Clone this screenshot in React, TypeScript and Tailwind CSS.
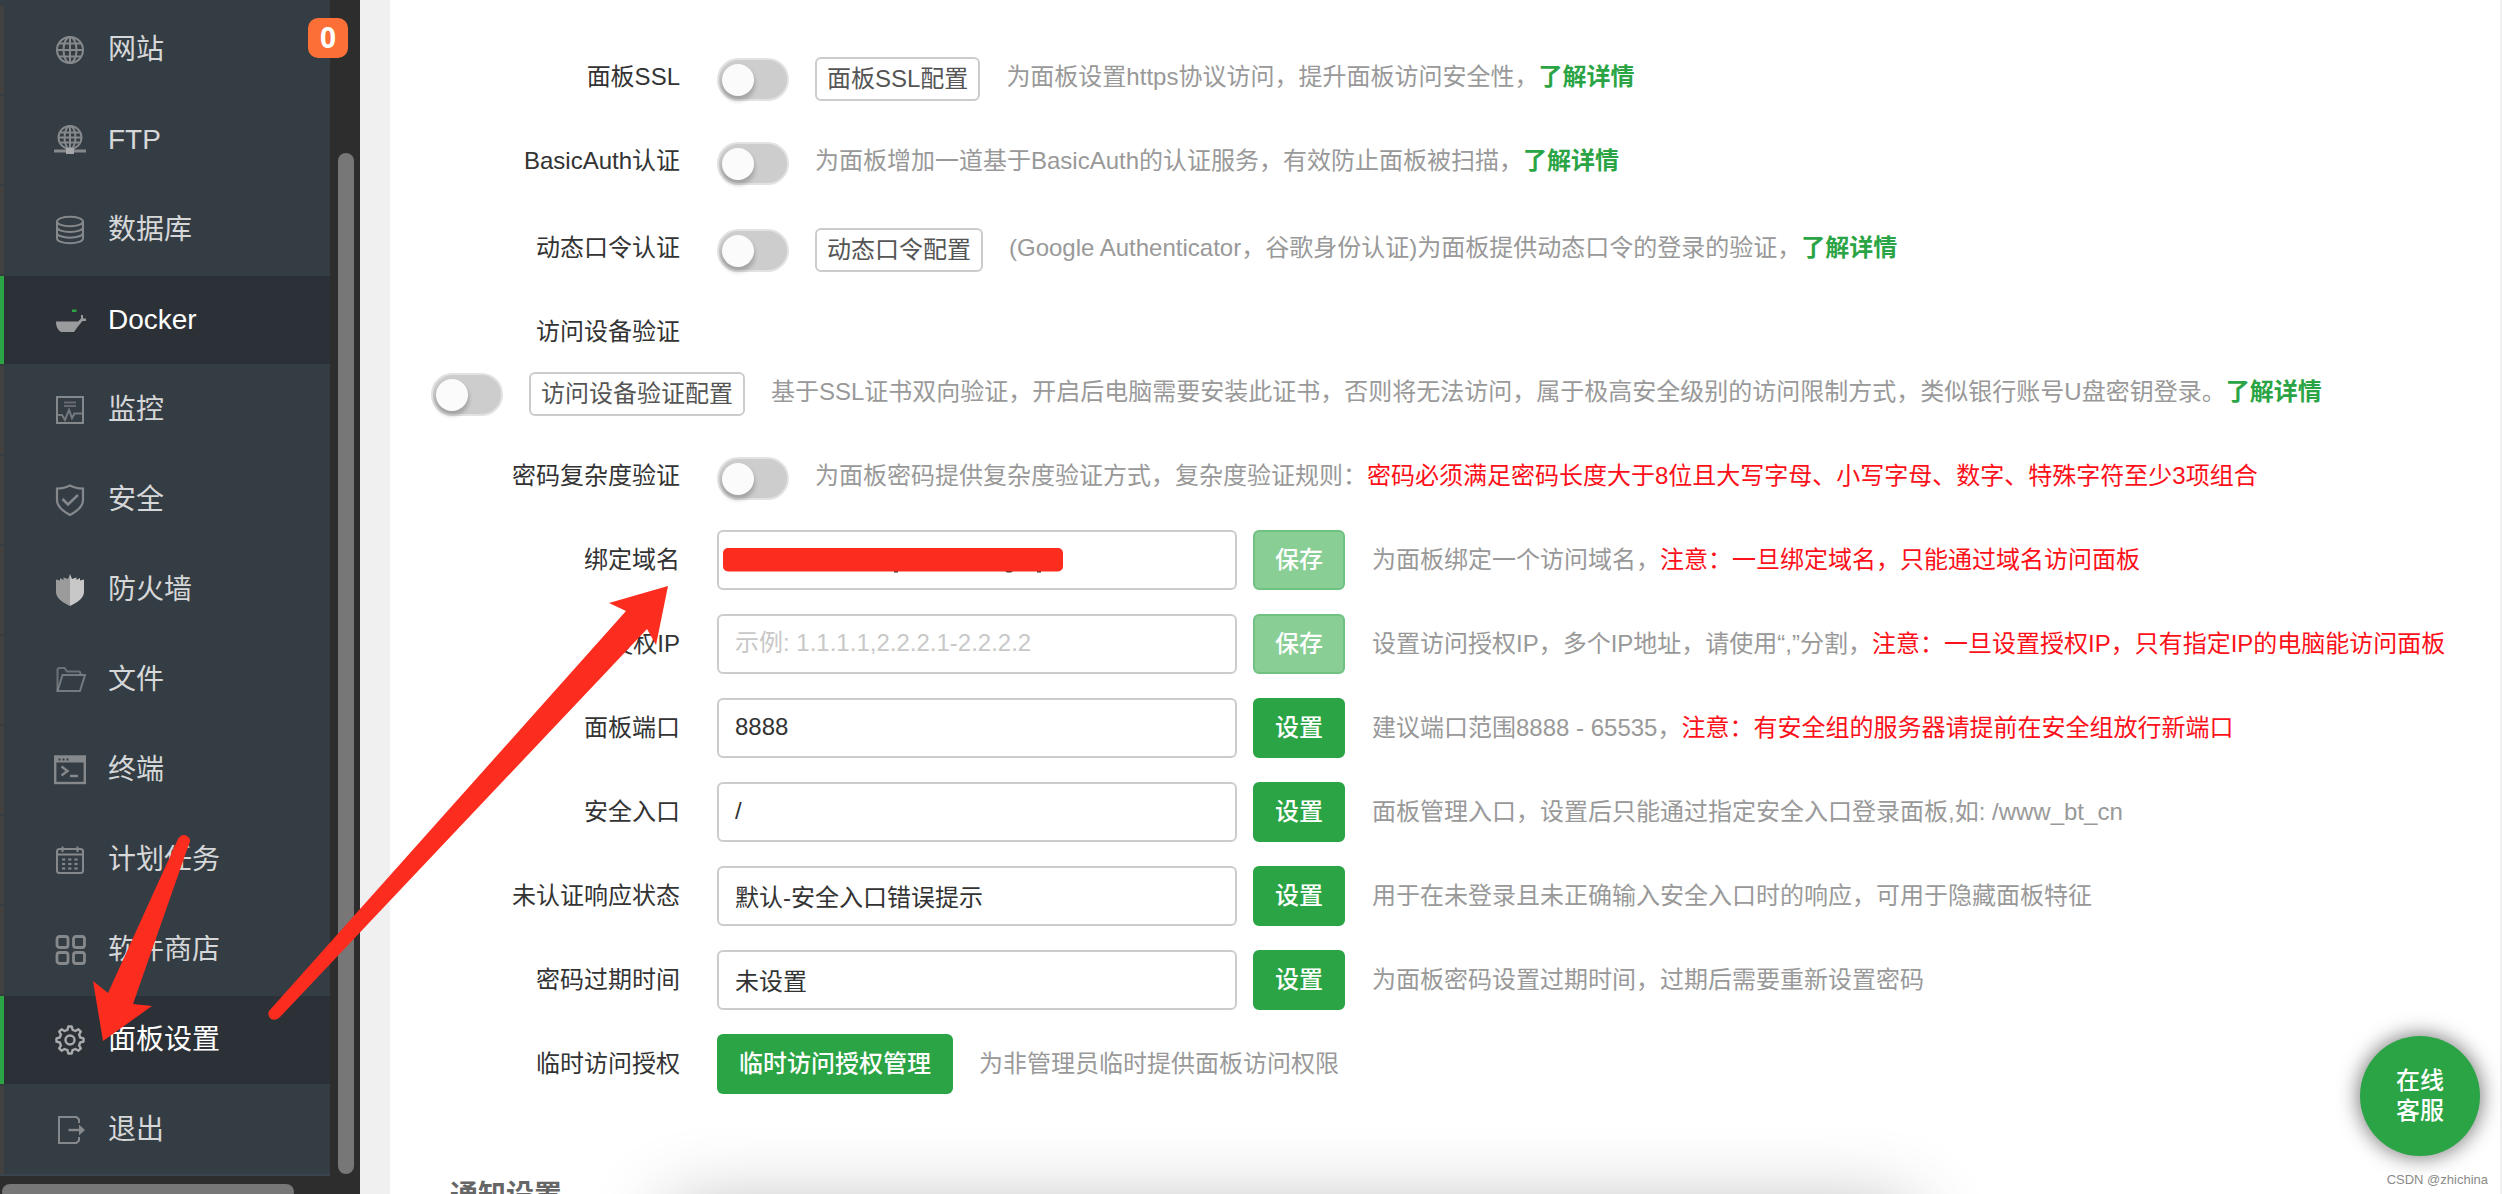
import { useState } from "react";
import type { ReactNode } from "react";

interface MenuItem {
    name: string;
    icon: ReactNode;
    active?: boolean;
}

interface InputRowProps {
    id: string;
    label: string;
    value?: string;
    placeholder?: string;
    button: string;
    disabled?: boolean;
    cover?: ReactNode;
    children: ReactNode;
}

// line icons of the side menu
function Icon({ children }: { children: ReactNode }) {
    return (
        <svg viewBox="0 0 32 32" className="h-8 w-8 shrink-0 text-[#85898c]" fill="none" stroke="currentColor" strokeWidth="2">
            {children}
        </svg>
    );
}

const menu: MenuItem[] = [
    {
        name: "网站",
        icon: (
            <Icon>
                <circle cx="16" cy="16" r="13" />
                <ellipse cx="16" cy="16" rx="6.5" ry="13" />
                <path d="M16 3v26M3 16h26M5 9.5h22M5 22.5h22" />
            </Icon>
        ),
    },
    {
        name: "FTP",
        icon: (
            <Icon>
                <circle cx="16" cy="13.5" r="11.5" />
                <ellipse cx="16" cy="13.5" rx="5.5" ry="11.5" />
                <path d="M16 2v23M5 13.5h22M6.5 8.5h19M6.5 18.5h19" />
                <path d="M0 27h32" strokeWidth="3" />
                <rect x="12" y="24" width="8" height="6" fill="#a6a8aa" stroke="none" />
            </Icon>
        ),
    },
    {
        name: "数据库",
        icon: (
            <Icon>
                <ellipse cx="16" cy="7.5" rx="13" ry="4.8" />
                <path d="M3 7.5v17c0 2.7 5.8 4.8 13 4.8s13-2.1 13-4.8v-17M3 13.2c0 2.7 5.8 4.8 13 4.8s13-2.1 13-4.8M3 18.9c0 2.7 5.8 4.8 13 4.8s13-2.1 13-4.8" />
            </Icon>
        ),
    },
    {
        name: "Docker",
        active: true,
        icon: (
            <Icon>
                <path d="M2 17.5h22l3-3V11h2v3.5h3v2.5h-3.5l-5 6-3.5 5H7c-3-2-5-5-5-10.500z" fill="#999b9d" stroke="none" />
                <rect x="18" y="5.5" width="4.5" height="2.5" fill="#2aa444" stroke="none" />
            </Icon>
        ),
    },
    {
        name: "监控",
        icon: (
            <Icon>
                <rect x="3" y="3" width="26" height="26" />
                <path d="M10 8.5h12M10 12h12" opacity="0.6" />
                <path d="M4 21h4l3 5 4-10 3 8 2.5-4.5H28" opacity="0.8" />
            </Icon>
        ),
    },
    {
        name: "安全",
        icon: (
            <Icon>
                <path d="M16 1.5c4 2.2 8 3 13 3V16c0 6.5-5.5 11-13 15C8.5 27 3 22.5 3 16V4.5c5 0 9-.8 13-3z" strokeWidth="2.2" />
                <path d="M8.5 15l5.5 5.5L24 11" strokeWidth="2.5" />
            </Icon>
        ),
    },
    {
        name: "防火墙",
        icon: (
            <Icon>
                <path d="M16 0v32C8 28.5 2 23.5 2 18V5.5l4 1V4l3.5 2V3.5L14 5z" fill="#9b9b9b" stroke="none" />
                <path d="M16 0v32c8-3.5 14-8.5 14-14V5.5l-4 1V4l-3.5 2V3.5L18 5z" fill="#c8c8c8" stroke="none" />
            </Icon>
        ),
    },
    {
        name: "文件",
        icon: (
            <Icon>
                <path d="M3.5 27V6c0-1.5.5-2 2-2h5l2.5 3.5h11.5c1.5 0 2 .5 2 2V11" opacity="0.7" />
                <path d="M3.5 27L8.5 11H31l-5 16z" opacity="0.8" />
            </Icon>
        ),
    },
    {
        name: "终端",
        icon: (
            <Icon>
                <rect x="1.2" y="2.5" width="29.6" height="26.5" strokeWidth="2.4" />
                <path d="M1 5.5h30" strokeWidth="6" />
                <path d="M4.5 5.5h2M8.5 5.5h2M12.5 5.5h2" stroke="#353d44" />
                <path d="M7.5 12.5l6 4.5-6 4.5M16 22h8" strokeWidth="2.4" />
            </Icon>
        ),
    },
    {
        name: "计划任务",
        icon: (
            <Icon>
                <rect x="3" y="5" width="26" height="24" rx="2.5" />
                <path d="M3 10.5h26M8.5 2.5v5.5M23.5 2.5v5.5" />
                <path d="M8 15.5h16M8 20h16M8 24.5h16" strokeDasharray="3.2 3" />
            </Icon>
        ),
    },
    {
        name: "软件商店",
        icon: (
            <Icon>
                <rect x="3" y="2.5" width="11" height="11" rx="2.5" strokeWidth="2.8" />
                <rect x="19.5" y="2.5" width="11" height="11" rx="2.5" strokeWidth="2.8" />
                <rect x="3" y="18.5" width="11" height="11" rx="2.5" strokeWidth="2.8" />
                <rect x="19.5" y="18.5" width="11" height="11" rx="2.5" strokeWidth="2.8" />
            </Icon>
        ),
    },
    {
        name: "面板设置",
        active: true,
        icon: (
            <Icon>
                <g stroke="#a9abad" strokeWidth="2.4" strokeLinejoin="round">
                    <circle cx="16" cy="16" r="4.5" />
                    <path d="M13.5 5.8l.8-3.3h3.4l.8 3.3 3 1.2 2.9-1.7 2.4 2.4-1.7 2.9 1.1 2.9 3.3.8v3.4l-3.3.8-1.1 2.9 1.7 2.9-2.4 2.4-2.9-1.7-3 1.2-.8 3.3h-3.4l-.8-3.3-3-1.2-2.9 1.7-2.4-2.4 1.7-2.9-1.1-2.9-3.3-.8v-3.4l3.3-.8 1.1-2.9-1.7-2.9 2.4-2.4L10.5 7z" />
                </g>
            </Icon>
        ),
    },
    {
        name: "退出",
        icon: (
            <Icon>
                <path d="M25 9V5.5L22.5 3H5v26h17.5l2.5-2.5V23" />
                <path d="M14.5 16H29" strokeWidth="2.4" />
                <path d="M25 10.5l6 5.5-6 5.5z" fill="currentColor" stroke="none" />
            </Icon>
        ),
    },
];

function Sidebar() {
    return (
        <aside className="relative flex w-[360px] shrink-0 flex-col bg-[#2d2d2d]">
            <div className="flex flex-1">
                <nav className="w-[330px] border-b-2 border-[#3a444e] bg-[#353d44] pt-1.5">
                    <ul className="flex flex-col gap-0.5">
                        {menu.map((item) => (
                            <li key={item.name}>
                                <a
                                    href="#"
                                    className={`flex h-[88px] items-center gap-[22px] border-l-4 pl-[50px] text-[28px] ${
                                        item.active ? "border-[#2aa444] bg-[#2c3138] text-white" : "border-[#434140] text-[#d5d7d8]"
                                    }`}
                                >
                                    {item.icon}
                                    {item.name}
                                </a>
                            </li>
                        ))}
                    </ul>
                </nav>
                <div className="flex flex-1 flex-col pt-[153px] pb-0.5 pl-2">
                    <div className="w-4 flex-1 rounded-full bg-[#777777]" />
                </div>
            </div>
            <div className="h-[18px] overflow-hidden pt-2 pl-0.5">
                <div className="h-4 w-[292px] rounded-full bg-[#777777]" />
            </div>
            <span className="absolute top-[18px] right-3 flex h-10 w-10 items-center justify-center rounded-[10px] bg-[#fc6f36] font-['Noto_Sans'] text-[28px] font-bold text-white">
                0
            </span>
        </aside>
    );
}

function Row({ label, htmlFor, children }: { label: string; htmlFor?: string; children?: ReactNode }) {
    return (
        <div className="flex h-[84px] items-center">
            <label htmlFor={htmlFor} className="mr-[37px] w-[290px] shrink-0 text-right text-[#333333]">
                {label}
            </label>
            {children}
        </div>
    );
}

function Toggle({ id, label }: { id: string; label: string }) {
    const [on, setOn] = useState(false);
    return (
        <input
            id={id}
            type="checkbox"
            role="switch"
            aria-label={label}
            checked={on}
            onChange={() => setOn(!on)}
            className="mt-1 mr-[26px] h-[43px] w-[72px] shrink-0 appearance-none rounded-full border-2 border-[#e2e2e2] bg-[#cdcdcd] px-[3px] py-1 before:block before:h-8 before:w-8 before:rounded-full before:bg-[#fbfbfb] before:shadow-[0_4px_4px_1px_rgba(0,0,0,0.2)] checked:bg-[#2aa444] checked:before:ml-auto"
        />
    );
}

function ConfigButton({ children }: { children: ReactNode }) {
    return (
        <button className="mt-1 mr-[26px] h-11 shrink-0 rounded-md border-2 border-[#cccccc] bg-white px-2.5 leading-10 text-[#555555]">
            {children}
        </button>
    );
}

function Tip({ children }: { children: ReactNode }) {
    return <p className="whitespace-nowrap text-[#999999]">{children}</p>;
}

function More() {
    return (
        <a href="#" className="font-bold text-[#2aa444]">
            了解详情
        </a>
    );
}

function Warn({ children }: { children: ReactNode }) {
    return <span className="text-[#fc1019]">{children}</span>;
}

function InputRow({ id, label, value, placeholder, button, disabled, cover, children }: InputRowProps) {
    return (
        <Row label={label} htmlFor={id}>
            <div className="relative mr-4 shrink-0">
                <input
                    id={id}
                    type="text"
                    defaultValue={value}
                    placeholder={placeholder}
                    className="block h-[60px] w-[520px] rounded-md border-2 border-[#cccccc] bg-white px-4 pb-0.5 text-[#333333] placeholder:text-[#c8c8c8]"
                />
                {cover}
            </div>
            <button
                disabled={disabled}
                className="mr-[27px] h-[60px] w-[92px] shrink-0 rounded-md border-2 border-[#2aa444] bg-[#2aa444] font-medium text-white disabled:border-[#70c283] disabled:bg-[#88ce95]"
            >
                {button}
            </button>
            <Tip>{children}</Tip>
        </Row>
    );
}

// Marker bar over the domain value, with the tails of its letters below
function Redaction() {
    return (
        <svg viewBox="0 0 340 26" className="absolute top-[18px] left-1.5 h-[26px] w-[340px]">
            <path d="M171 23h4v1.5h-4zM282 23h8l-2 1.5h-4zM314 23h4v1.5h-4z" fill="#333333" />
            <rect width="340" height="23.5" rx="5" fill="#fc2c1e" />
        </svg>
    );
}

function Arrows() {
    return (
        <svg viewBox="0 0 680 1050" className="pointer-events-none absolute top-0 left-0 h-[1050px] w-[680px]" fill="#fc2c1e">
            <path d="M178 839Q182 833 187 836Q192 839 189 844L133 1004L152 1006L103 1041L93 981L108 993z" />
            <path d="M269 1011L626 611L609 603L668 586L656 645L647 629L280 1017Q276 1021 271 1019Q267 1015 269 1011z" />
        </svg>
    );
}

export default function App() {
    return (
        <div className="relative flex h-screen overflow-hidden bg-[#f0f0f0] font-['Liberation_Sans','Noto_Sans_CJK_SC',sans-serif] text-2xl">
            <Sidebar />

            <main className="relative mr-0.5 ml-[30px] flex-1 overflow-hidden bg-white pt-[35px]">
                <Row label="面板SSL" htmlFor="ssl">
                    <Toggle id="ssl" label="面板SSL" />
                    <ConfigButton>面板SSL配置</ConfigButton>
                    <Tip>
                        为面板设置https协议访问，提升面板访问安全性，
                        <More />
                    </Tip>
                </Row>
                <Row label="BasicAuth认证" htmlFor="basic-auth">
                    <Toggle id="basic-auth" label="BasicAuth认证" />
                    <Tip>
                        为面板增加一道基于BasicAuth的认证服务，有效防止面板被扫描，
                        <More />
                    </Tip>
                </Row>
                <div className="pt-[3px]">
                    <Row label="动态口令认证" htmlFor="otp">
                        <Toggle id="otp" label="动态口令认证" />
                        <ConfigButton>动态口令配置</ConfigButton>
                        <Tip>
                            (Google Authenticator，谷歌身份认证)为面板提供动态口令的登录的验证，
                            <More />
                        </Tip>
                    </Row>
                </div>
                <Row label="访问设备验证" htmlFor="device" />
                <div className="-mt-1 mb-5 flex h-11 items-center pl-[41px]">
                    <Toggle id="device" label="访问设备验证" />
                    <ConfigButton>访问设备验证配置</ConfigButton>
                    <Tip>
                        基于SSL证书双向验证，开启后电脑需要安装此证书，否则将无法访问，属于极高安全级别的访问限制方式，类似银行账号U盘密钥登录。
                        <More />
                    </Tip>
                </div>
                <Row label="密码复杂度验证" htmlFor="complexity">
                    <Toggle id="complexity" label="密码复杂度验证" />
                    <Tip>
                        为面板密码提供复杂度验证方式，复杂度验证规则：
                        <Warn>密码必须满足密码长度大于8位且大写字母、小写字母、数字、特殊字符至少3项组合</Warn>
                    </Tip>
                </Row>

                <InputRow id="domain" label="绑定域名" button="保存" disabled cover={<Redaction />}>
                    为面板绑定一个访问域名，<Warn>注意：一旦绑定域名，只能通过域名访问面板</Warn>
                </InputRow>
                <InputRow id="ip" label="授权IP" placeholder="示例: 1.1.1.1,2.2.2.1-2.2.2.2" button="保存" disabled>
                    设置访问授权IP，多个IP地址，请使用“,”分割，<Warn>注意：一旦设置授权IP，只有指定IP的电脑能访问面板</Warn>
                </InputRow>
                <InputRow id="port" label="面板端口" value="8888" button="设置">
                    建议端口范围8888 - 65535，<Warn>注意：有安全组的服务器请提前在安全组放行新端口</Warn>
                </InputRow>
                <InputRow id="entry" label="安全入口" value="/" button="设置">
                    面板管理入口，设置后只能通过指定安全入口登录面板,如: /www_bt_cn
                </InputRow>
                <InputRow id="status" label="未认证响应状态" value="默认-安全入口错误提示" button="设置">
                    用于在未登录且未正确输入安全入口时的响应，可用于隐藏面板特征
                </InputRow>
                <InputRow id="expire" label="密码过期时间" value="未设置" button="设置">
                    为面板密码设置过期时间，过期后需要重新设置密码
                </InputRow>
                <Row label="临时访问授权" htmlFor="temp">
                    <button id="temp" className="mr-[26px] h-[60px] w-[236px] shrink-0 rounded-md bg-[#2aa444] font-medium text-white">
                        临时访问授权管理
                    </button>
                    <Tip>为非管理员临时提供面板访问权限</Tip>
                </Row>

                <h2 className="mt-[70px] pl-[60px] text-[28px] leading-10 font-bold text-[#666666]">通知设置</h2>

                <div className="absolute -bottom-28 left-[280px] h-24 w-[1240px] shadow-[0_0_80px_0_rgba(0,0,0,0.3)]" />
            </main>

            <button className="absolute right-[22px] bottom-[38px] h-[120px] w-[120px] rounded-full bg-[#2aa444] px-8 leading-[30px] font-medium text-white shadow-[0_0_20px_2px_rgba(0,0,0,0.5)]">
                在线 客服
            </button>
            <p className="absolute right-[14px] bottom-1.5 text-[13px] text-[#8a8a8a]">CSDN @zhichina</p>

            <Arrows />
        </div>
    );
}
